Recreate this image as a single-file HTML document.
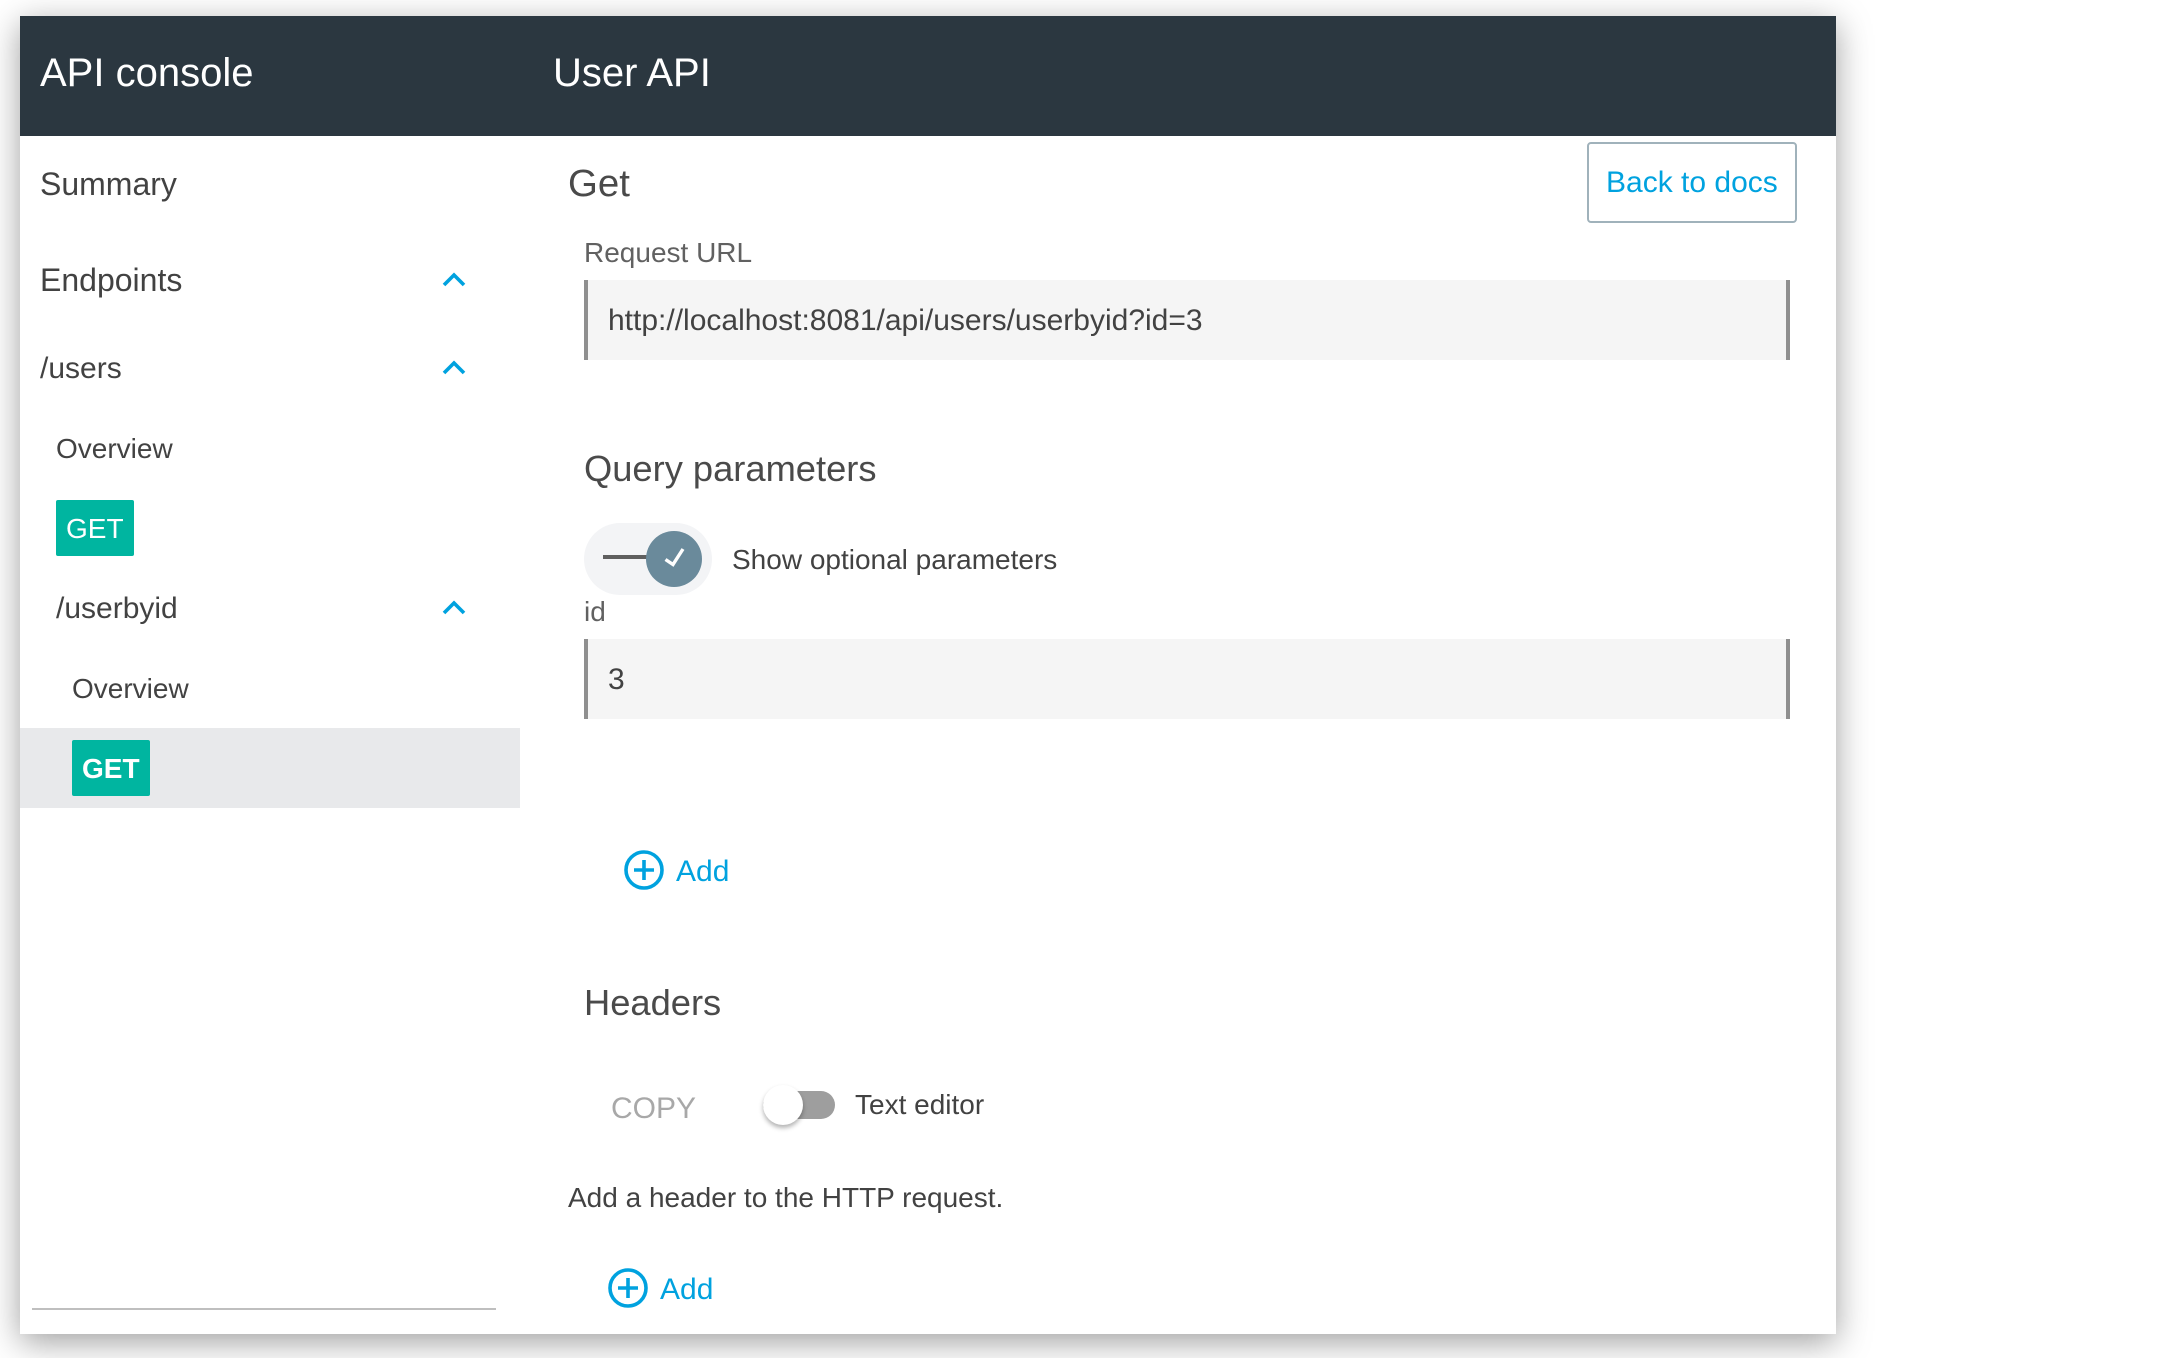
<!DOCTYPE html>
<html><head><meta charset="utf-8"><style>
html,body{margin:0;padding:0;background:#fff;width:2162px;height:1358px;overflow:hidden}
body{position:relative;font-family:"Liberation Sans",sans-serif;color:#424242}
.a{position:absolute}
.t{position:absolute;white-space:nowrap;line-height:normal;filter:blur(.35px)}
#p{left:20px;top:16px;width:1816px;height:1318px;background:#fff;box-shadow:0 8px 32px rgba(0,0,0,.38)}
.inp{position:absolute;left:584px;width:1198px;height:80px;background:#f5f5f5;border-left:4px solid #8f8f8f;border-right:4px solid #8f8f8f}
.g{position:absolute;width:78px;height:56px;background:#00b5a0;border-radius:2px}
svg{position:absolute;left:0;top:0}
</style></head><body>
<div id="p" class="a"></div>
<div class="a" style="left:20px;top:16px;width:1816px;height:120px;background:#2b3740"></div>
<div class="a" style="left:20px;top:728px;width:500px;height:80px;background:#e8e9eb"></div>
<div class="a" style="left:32px;top:1308px;width:464px;height:2px;background:#bfbfbf"></div>
<div class="inp" style="top:280px"></div>
<div class="inp" style="top:639px"></div>
<div class="g" style="left:56px;top:500px"></div>
<div class="g" style="left:72px;top:740px"></div>
<div class="a" style="left:1587px;top:142px;width:206px;height:77px;border:2px solid #a0b2bb;border-radius:4px"></div>
<div class="a" style="left:584px;top:523px;width:128px;height:72px;border-radius:36px;background:#f3f4f6"></div>
<div class="a" style="left:603px;top:555px;width:45px;height:4px;background:#5f5f5f"></div>
<div class="a" style="left:646px;top:531px;width:56px;height:56px;border-radius:50%;background:#6a8a9b"></div>
<div class="a" style="left:763px;top:1091px;width:72px;height:28px;border-radius:14px;background:#9e9e9e"></div>
<div class="a" style="left:763px;top:1085px;width:40px;height:40px;border-radius:50%;background:#fff;box-shadow:0 3px 5px rgba(0,0,0,.3)"></div>
<svg width="2162" height="1358" fill="none">
<g stroke="#00a2df" stroke-width="3.6">
<polyline points="444,285 454,275 464,285"/>
<polyline points="444,373 454,363 464,373"/>
<polyline points="444,613 454,603 464,613"/>
<circle cx="644" cy="870" r="18"/><path d="M634 870h20M644 860v20"/>
<circle cx="628" cy="1288" r="18"/><path d="M618 1288h20M628 1278v20"/>
</g>
<polyline points="665.5,559.5 673,564.5 683,549" stroke="#fff" stroke-width="3.4"/>
</svg>
<div class="t" style="left:40px;top:51px;font-size:40px;color:#fff">API console</div>
<div class="t" style="left:553px;top:51px;font-size:40px;color:#fff">User API</div>
<div class="t" style="left:40px;top:166px;font-size:32px">Summary</div>
<div class="t" style="left:568px;top:162px;font-size:38.4px;color:#4a4a4a">Get</div>
<div class="t" style="left:40px;top:262px;font-size:32px">Endpoints</div>
<div class="t" style="left:40px;top:352px;font-size:30px">/users</div>
<div class="t" style="left:56px;top:433px;font-size:28px">Overview</div>
<div class="t" style="left:66px;top:513px;font-size:28px;color:#fff">GET</div>
<div class="t" style="left:56px;top:592px;font-size:30px">/userbyid</div>
<div class="t" style="left:72px;top:673px;font-size:28px">Overview</div>
<div class="t" style="left:82px;top:753px;font-size:28px;color:#fff;font-weight:bold">GET</div>
<div class="t" style="left:584px;top:237px;font-size:28px;color:#616161">Request URL</div>
<div class="t" style="left:608px;top:304px;font-size:30px">http://localhost:8081/api/users/userbyid?id=3</div>
<div class="t" style="left:1606px;top:166px;font-size:30px;color:#00a2df">Back to docs</div>
<div class="t" style="left:584px;top:448px;font-size:36.3px;color:#4a4a4a">Query parameters</div>
<div class="t" style="left:732px;top:544px;font-size:28px">Show optional parameters</div>
<div class="t" style="left:584px;top:596px;font-size:28px;color:#616161">id</div>
<div class="t" style="left:608px;top:663px;font-size:30px">3</div>
<div class="t" style="left:676px;top:855px;font-size:30px;color:#00a2df">Add</div>
<div class="t" style="left:584px;top:982px;font-size:36.3px;color:#4a4a4a">Headers</div>
<div class="t" style="left:611px;top:1092px;font-size:30px;color:#a8a8a8">COPY</div>
<div class="t" style="left:855px;top:1089px;font-size:28px">Text editor</div>
<div class="t" style="left:568px;top:1182px;font-size:28px">Add a header to the HTTP request.</div>
<div class="t" style="left:660px;top:1273px;font-size:30px;color:#00a2df">Add</div>
</body></html>
